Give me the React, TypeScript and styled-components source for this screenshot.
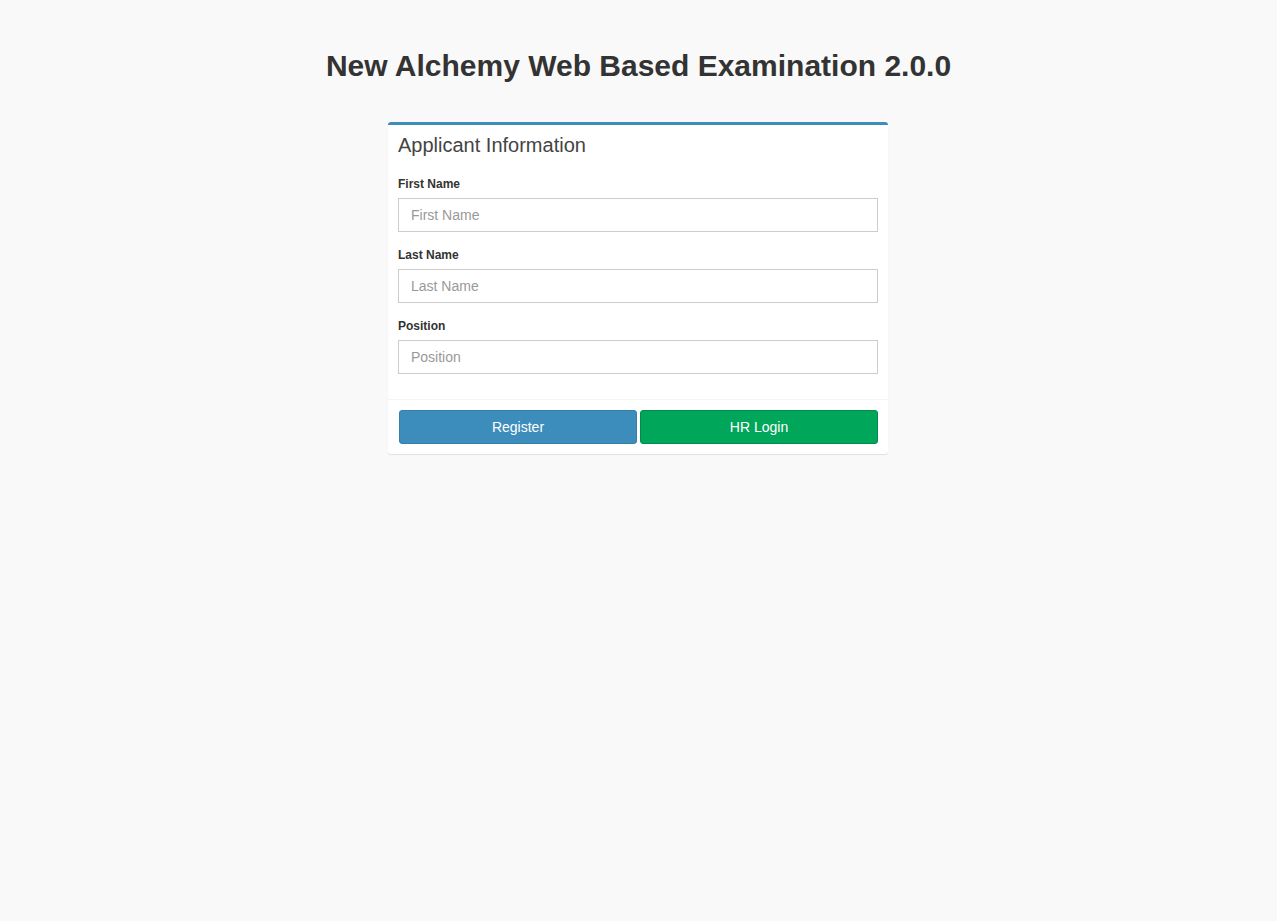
import React from "react";
import styled, { createGlobalStyle } from "styled-components";

const Global = createGlobalStyle`
  html, body { margin: 0; padding: 0; background: #f9f9f9; }
  body { font-family: "Liberation Sans", Arial, sans-serif; color: #333; }
  * { box-sizing: border-box; }
`;

const Page = styled.div`
  min-height: 921px;
  background: #f9f9f9;
  display: flex;
  flex-direction: column;
  align-items: center;
  padding-top: 48px;
`;

const Title = styled.h1`
  margin: 0 0 38px;
  font-size: 30px;
  line-height: 36px;
  font-weight: 700;
  color: #333;
  text-align: center;
`;

const Box = styled.div`
  width: 500px;
  margin-right: 1px;
  background: #fff;
  border-top: 3px solid #3c8dbc;
  border-radius: 3px;
  box-shadow: 0 1px 1px rgba(0, 0, 0, 0.1);
`;

const BoxHeader = styled.div`
  padding: 10px;
`;

const BoxTitle = styled.h3`
  margin: 0;
  font-size: 20px;
  line-height: 20px;
  font-weight: 400;
  color: #444;
`;

const BoxBody = styled.div`
  padding: 11px 10px 10px;
`;

const FormGroup = styled.div`
  margin-bottom: 15px;
`;

const Label = styled.label`
  display: block;
  font-size: 12px;
  line-height: 17px;
  font-weight: 700;
  color: #333;
  margin-bottom: 5px;
`;

const Input = styled.input`
  display: block;
  width: 100%;
  height: 34px;
  padding: 6px 12px;
  font-size: 14px;
  font-family: "Liberation Sans", Arial, sans-serif;
  color: #555;
  border: 1px solid #ccc;
  border-radius: 0;
  outline: none;
  background: #fff;
  &::placeholder { color: #999; }
`;

const BoxFooter = styled.div`
  border-top: 1px solid #f4f4f4;
  padding: 10px 10px 10px 11px;
  display: grid;
  grid-template-columns: 1fr 1fr;
  gap: 3px;
`;

const Button = styled.button<{ $variant: "primary" | "success" }>`
  height: 34px;
  font-size: 14px;
  font-family: "Liberation Sans", Arial, sans-serif;
  color: #fff;
  border-radius: 3px;
  cursor: pointer;
  background: ${(p) => (p.$variant === "primary" ? "#3c8dbc" : "#00a65a")};
  border: 1px solid ${(p) => (p.$variant === "primary" ? "#367fa9" : "#008d4c")};
`;

const fields = ["First Name", "Last Name", "Position"];

export default function App() {
  return (
    <>
      <Global />
      <Page>
        <Title>New Alchemy Web Based Examination 2.0.0</Title>
        <Box>
          <BoxHeader>
            <BoxTitle>Applicant Information</BoxTitle>
          </BoxHeader>
          <BoxBody>
            {fields.map((f) => (
              <FormGroup key={f}>
                <Label>{f}</Label>
                <Input placeholder={f} />
              </FormGroup>
            ))}
          </BoxBody>
          <BoxFooter>
            <Button $variant="primary">Register</Button>
            <Button $variant="success">HR Login</Button>
          </BoxFooter>
        </Box>
      </Page>
    </>
  );
}
